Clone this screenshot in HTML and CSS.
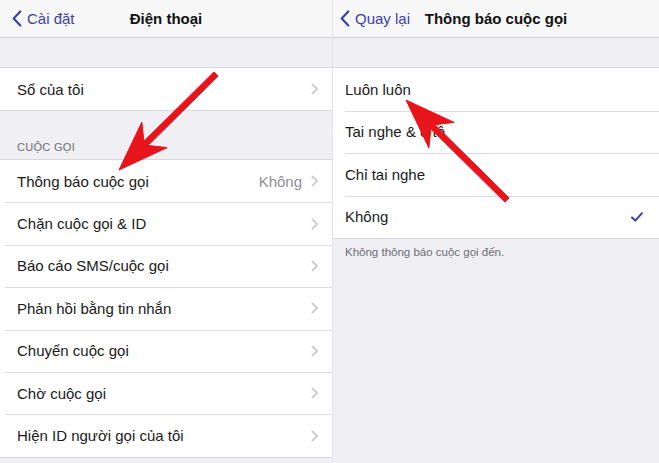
FILE: index.html
```html
<!DOCTYPE html>
<html lang="vi">
<head>
    <meta charset="UTF-8">
    <title>Thông báo cuộc gọi</title>
    <link rel="stylesheet" href="styles.css">
</head>
<body>
    <div class="phones">
        <section class="screen screen-left">
            <header class="navbar">
                <a class="back" href="#">
                    <svg class="back-icon" viewBox="0 0 10 18"><polyline points="8.5,1.5 1.5,9 8.5,16.5"/></svg>
                    Cài đặt
                </a>
                <h1>Điện thoại</h1>
                <span></span>
            </header>
            <div class="spacer"></div>
            <ul class="group">
                <li class="row">
                    <span class="label">Sổ của tôi</span>
                    <svg class="chevron" viewBox="0 0 7 12"><polyline points="1,1 6,6 1,11"/></svg>
                </li>
            </ul>
            <div class="section-title">CUỘC GỌI</div>
            <ul class="group">
                <li class="row">
                    <span class="label">Thông báo cuộc gọi</span>
                    <span class="value">Không</span>
                    <svg class="chevron" viewBox="0 0 7 12"><polyline points="1,1 6,6 1,11"/></svg>
                </li>
                <li class="row">
                    <span class="label">Chặn cuộc gọi &amp; ID</span>
                    <svg class="chevron" viewBox="0 0 7 12"><polyline points="1,1 6,6 1,11"/></svg>
                </li>
                <li class="row">
                    <span class="label">Báo cáo SMS/cuộc gọi</span>
                    <svg class="chevron" viewBox="0 0 7 12"><polyline points="1,1 6,6 1,11"/></svg>
                </li>
                <li class="row">
                    <span class="label">Phản hồi bằng tin nhắn</span>
                    <svg class="chevron" viewBox="0 0 7 12"><polyline points="1,1 6,6 1,11"/></svg>
                </li>
                <li class="row">
                    <span class="label">Chuyển cuộc gọi</span>
                    <svg class="chevron" viewBox="0 0 7 12"><polyline points="1,1 6,6 1,11"/></svg>
                </li>
                <li class="row">
                    <span class="label">Chờ cuộc gọi</span>
                    <svg class="chevron" viewBox="0 0 7 12"><polyline points="1,1 6,6 1,11"/></svg>
                </li>
                <li class="row">
                    <span class="label">Hiện ID người gọi của tôi</span>
                    <svg class="chevron" viewBox="0 0 7 12"><polyline points="1,1 6,6 1,11"/></svg>
                </li>
            </ul>
        </section>

        <section class="screen screen-right">
            <header class="navbar">
                <a class="back" href="#">
                    <svg class="back-icon" viewBox="0 0 10 18"><polyline points="8.5,1.5 1.5,9 8.5,16.5"/></svg>
                    Quay lại
                </a>
                <h1>Thông báo cuộc gọi</h1>
                <span></span>
            </header>
            <div class="spacer"></div>
            <ul class="group">
                <li class="row"><span class="label">Luôn luôn</span></li>
                <li class="row"><span class="label">Tai nghe &amp; ô tô</span></li>
                <li class="row"><span class="label">Chỉ tai nghe</span></li>
                <li class="row">
                    <span class="label">Không</span>
                    <svg class="check" viewBox="0 0 12 10"><polyline points="1,5.5 4.3,8.6 11,1.2"/></svg>
                </li>
            </ul>
            <p class="footnote">Không thông báo cuộc gọi đến.</p>
        </section>

        <!-- red pointers drawn over both screens -->
        <svg class="arrows" viewBox="0 0 659 463">
            <polygon points="213.9,71.9 143.9,141.2 141.85,122.1 119,170 167.15,147.6 148.1,145.4 218.1,76.1"/>
            <polygon points="504.9,202.1 430.9,128.9 428.9,148 406,100 454.2,122.4 435.1,124.7 509.1,197.9"/>
        </svg>
    </div>
</body>
</html>
```

FILE: styles.css
```css
body {
    margin: 0;
    font-family: "Liberation Sans", Arial, sans-serif;
    background-color: #efeff4;
    color: #1a1a1a;
}
.phones {
    position: relative;
    display: flex;
    width: 659px;
    height: 463px;
    overflow: hidden;
}
.screen {
    background-color: #efeff4;
    height: 463px;
}
.screen-left {
    width: 332px;
    border-right: 1px solid #e2e2e8;
}
.screen-right {
    flex: 1;
}
.navbar {
    display: grid;
    grid-template-columns: 1fr auto 1fr;
    align-items: center;
    height: 37px;
    background-color: #f7f7f8;
    border-bottom: 1px solid #d3d3d8;
}
.navbar h1 {
    margin: 0;
    font-size: 15px;
    font-weight: bold;
    color: #111;
}
.back {
    display: flex;
    align-items: center;
    gap: 5px;
    color: #3a3fa6;
    text-decoration: none;
    font-size: 15px;
}
.screen-left .back {
    padding-left: 12px;
}
.screen-right .back {
    padding-left: 7px;
}
.back-icon {
    width: 10px;
    height: 17px;
    fill: none;
    stroke: #3a3fa6;
    stroke-width: 2.2;
    stroke-linecap: round;
    stroke-linejoin: round;
}
.spacer {
    height: 29px;
}
.group {
    list-style: none;
    margin: 0;
    padding: 0;
    background-color: #fff;
    border-top: 1px solid #d8d8dd;
    border-bottom: 1px solid #d8d8dd;
}
.row {
    display: flex;
    align-items: center;
    height: 42.4px;
    padding: 0 14px 0 17px;
    font-size: 15px;
    background-color: #fff;
}
.screen-left .group:first-of-type .row {
    height: 42px;
}
.row + .row {
    background: linear-gradient(#dcdce0, #dcdce0) 5px 0 / 100% 1px no-repeat, #fff;
}
.screen-right .row {
    padding-left: 12px;
    padding-right: 16px;
    height: 42.5px;
}
.screen-right .row + .row {
    background: linear-gradient(#dcdce0, #dcdce0) 12px 0 / 100% 1px no-repeat, #fff;
}
.label {
    flex: 1;
}
.value {
    color: #8e8e93;
    margin-right: 9px;
}
.chevron {
    width: 7px;
    height: 12px;
    fill: none;
    stroke: #c4c4c9;
    stroke-width: 1.6;
}
.check {
    width: 12px;
    height: 10px;
    fill: none;
    stroke: #3a3fa6;
    stroke-width: 2;
    stroke-linecap: round;
    stroke-linejoin: round;
}
.section-title {
    padding: 30px 0 6px 17px;
    font-size: 11px;
    color: #6d6d72;
    letter-spacing: 0.3px;
}
.footnote {
    margin: 7px 0 0 12px;
    font-size: 11.5px;
    color: #6d6d72;
}
.arrows {
    position: absolute;
    top: 0;
    left: 0;
    width: 659px;
    height: 463px;
    pointer-events: none;
}
.arrows polygon {
    fill: #e8141b;
    stroke: #e8141b;
    stroke-width: 1;
    stroke-linejoin: round;
}
```
